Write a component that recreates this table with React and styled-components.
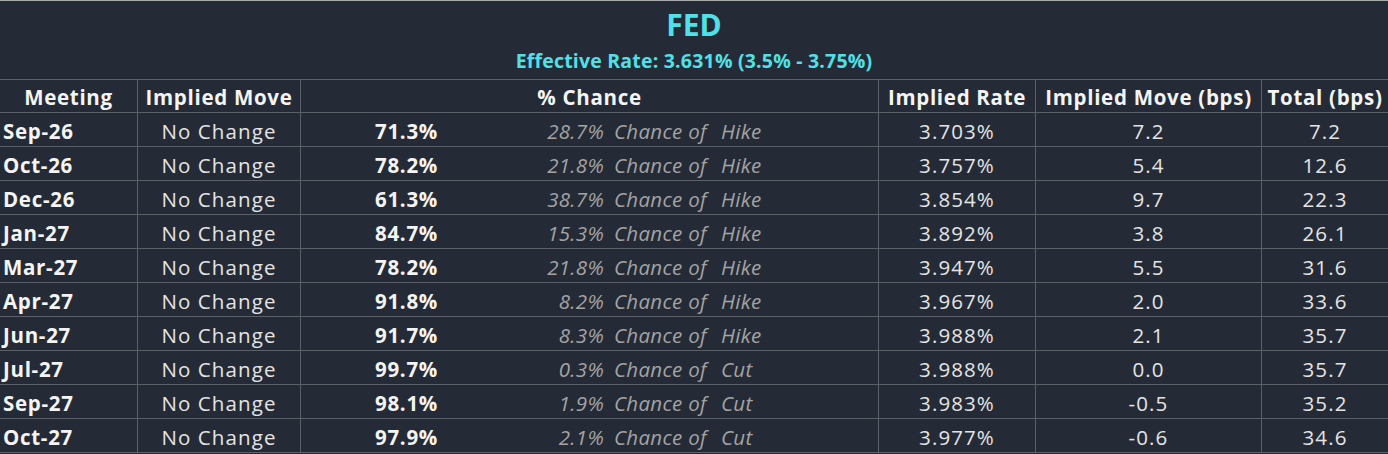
import React from "react";
import styled, { createGlobalStyle } from "styled-components";

const GlobalStyle = createGlobalStyle`
  html, body {
    margin: 0;
    padding: 0;
    background: #252b36;
  }
  body {
    font-family: "Open Sans", "Liberation Sans", sans-serif;
  }
`;

const Panel = styled.div`
  width: 1388px;
  height: 454px;
  background: #252b36;
  border-top: 1px solid #a9abae;
  box-sizing: border-box;
  color: #e4e4e4;
  overflow: hidden;
`;

const TitleBlock = styled.div`
  height: 78px;
  display: flex;
  flex-direction: column;
  align-items: center;
  color: #50e0e8;
  font-weight: 700;
`;

const Title = styled.div`
  font-size: 30px;
  line-height: 30px;
  margin-top: 9px;
`;

const Subtitle = styled.div`
  font-size: 19.5px;
  line-height: 22px;
  margin-top: 10px;
  letter-spacing: 0.2px;
`;

const columns = "138px 163px 578px 157px 226px 126px";

const Row = styled.div`
  display: grid;
  grid-template-columns: ${columns};
  height: 34px;
  box-sizing: border-box;
  border-bottom: 1px solid #5c6169;
  border-top: ${({ $head }) => ($head ? "1px solid #5c6169" : "none")};
  font-size: 20.5px;
  line-height: 30px;
  white-space: nowrap;
  overflow: hidden;
`;

const HeadCell = styled.div`
  border-right: 1px solid #5c6169;
  padding-top: 2px;
  font-weight: 700;
  color: #f4f4f4;
  text-align: center;
  letter-spacing: 0.7px;
  &:last-child { border-right: none; }
`;

const Cell = styled.div`
  border-right: 1px solid #5c6169;
  padding-top: 3px;
  text-align: ${({ $align }) => $align || "center"};
  padding-left: ${({ $align }) => ($align === "left" ? "3px" : "0")};
  font-weight: ${({ $bold }) => ($bold ? 700 : 400)};
  color: ${({ $bold }) => ($bold ? "#f4f4f4" : "#e4e4e4")};
  letter-spacing: ${({ $bold }) => ($bold ? "0.7px" : "1.1px")};
  &:last-child { border-right: none; }
`;

const ChanceCell = styled.div`
  display: grid;
  grid-template-columns: 137px 166px 117px auto;
  padding-top: 3px;
  border-right: 1px solid #5c6169;
`;

const MainPct = styled.span`
  text-align: right;
  font-weight: 700;
  color: #f4f4f4;
  letter-spacing: 0.7px;
`;

const AltPct = styled.span`
  text-align: right;
  font-style: italic;
  color: #a3a3a3;
  letter-spacing: 0.3px;
`;

const AltText = styled.span`
  font-style: italic;
  color: #a3a3a3;
  letter-spacing: 0.3px;
  padding-left: ${({ $lead }) => ($lead ? "10px" : "0")};
`;

const rows = [
  ["Sep-26", "71.3%", "28.7%", "Hike", "3.703%", "7.2", "7.2"],
  ["Oct-26", "78.2%", "21.8%", "Hike", "3.757%", "5.4", "12.6"],
  ["Dec-26", "61.3%", "38.7%", "Hike", "3.854%", "9.7", "22.3"],
  ["Jan-27", "84.7%", "15.3%", "Hike", "3.892%", "3.8", "26.1"],
  ["Mar-27", "78.2%", "21.8%", "Hike", "3.947%", "5.5", "31.6"],
  ["Apr-27", "91.8%", "8.2%", "Hike", "3.967%", "2.0", "33.6"],
  ["Jun-27", "91.7%", "8.3%", "Hike", "3.988%", "2.1", "35.7"],
  ["Jul-27", "99.7%", "0.3%", "Cut", "3.988%", "0.0", "35.7"],
  ["Sep-27", "98.1%", "1.9%", "Cut", "3.983%", "-0.5", "35.2"],
  ["Oct-27", "97.9%", "2.1%", "Cut", "3.977%", "-0.6", "34.6"],
];

const headers = [
  "Meeting",
  "Implied Move",
  "% Chance",
  "Implied Rate",
  "Implied Move (bps)",
  "Total (bps)",
];

export default function App() {
  return (
    <Panel>
      <GlobalStyle />
      <TitleBlock>
        <Title>FED</Title>
        <Subtitle>Effective Rate: 3.631% (3.5% - 3.75%)</Subtitle>
      </TitleBlock>
      <Row $head>
        {headers.map((h) => (
          <HeadCell key={h}>{h}</HeadCell>
        ))}
      </Row>
      {rows.map(([meeting, pct, alt, kind, rate, move, total]) => (
        <Row key={meeting}>
          <Cell $align="left" $bold>{meeting}</Cell>
          <Cell>No Change</Cell>
          <ChanceCell>
            <MainPct>{pct}</MainPct>
            <AltPct>{alt}</AltPct>
            <AltText $lead>Chance of</AltText>
            <AltText>{kind}</AltText>
          </ChanceCell>
          <Cell>{rate}</Cell>
          <Cell>{move}</Cell>
          <Cell>{total}</Cell>
        </Row>
      ))}
    </Panel>
  );
}
